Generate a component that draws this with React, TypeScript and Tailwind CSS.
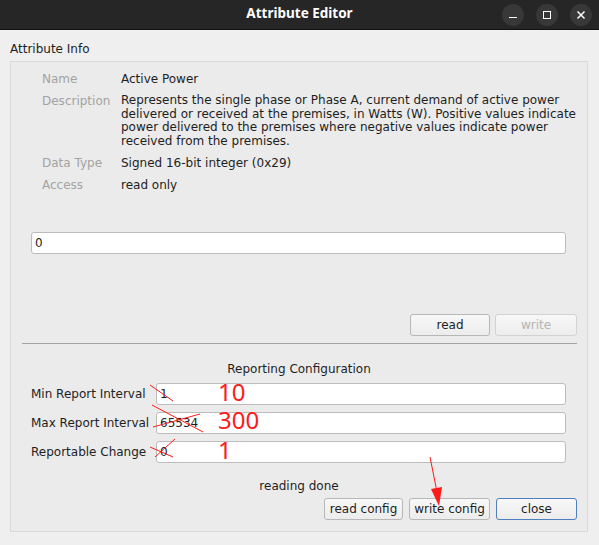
const info: Array<[string, string[]]> = [
  ["Name", ["Active Power"]],
  [
    "Description",
    [
      "Represents the single phase or Phase A, current demand of active power",
      "delivered or received at the premises, in Watts (W). Positive values indicate",
      "power delivered to the premises where negative values indicate power",
      "received from the premises.",
    ],
  ],
  ["Data Type", ["Signed 16-bit integer (0x29)"]],
  ["Access", ["read only"]],
];

const reporting: Array<[string, string]> = [
  ["Min Report Interval", "1"],
  ["Max Report Interval", "65534"],
  ["Reportable Change", "0"],
];

function Button({ label, width, disabled, primary }: { label: string; width: string; disabled?: boolean; primary?: boolean }) {
  const border = primary ? "border-[#4f7fbf]" : disabled ? "border-[#d2d2d2]" : "border-[#b7b7b7]";
  const text = disabled ? "text-[#b3b3b3]" : "text-[#1e1e1e]";
  return (
    <div
      className={`${width} ${border} ${text} flex h-[22px] items-center justify-center rounded-[3px] border bg-gradient-to-b from-[#f8f8f8] to-[#ececec] leading-none`}
    >
      {label}
    </div>
  );
}

function TitleButton({ children }: { children: React.ReactNode }) {
  return (
    <div className="flex h-[22px] w-[22px] items-center justify-center rounded-full bg-[#383838]">{children}</div>
  );
}

function Annotations() {
  return (
    <svg className="pointer-events-none absolute left-0 top-0" width="599" height="545" viewBox="0 0 599 545">
      <g stroke="#ff1a1a" strokeWidth="1" fill="none">
        <line x1="150" y1="385" x2="173" y2="401" />
        <line x1="152" y1="405" x2="203" y2="432" />
        <line x1="153" y1="427" x2="200" y2="414" />
        <line x1="150" y1="447" x2="173" y2="457" />
        <line x1="155" y1="457" x2="175" y2="439" />
        <line x1="430" y1="457" x2="437" y2="492" />
      </g>
      <polygon points="431,489 442,487 439,506" fill="#ff1a1a" />
      <g fill="#ff1a1a" fontFamily="'Noto Sans', sans-serif" fontSize="24">
        <text x="218" y="401">10</text>
        <text x="218" y="429">300</text>
        <text x="218" y="459">1</text>
      </g>
    </svg>
  );
}

export default function App() {
  return (
    <div className="relative h-[545px] w-[599px] overflow-hidden bg-[#efefef] font-['DejaVu_Sans',sans-serif] text-[12px] text-[#1e1e1e]">
      {/* title bar */}
      <div className="relative flex h-[30px] items-center justify-end gap-[12px] border-b border-[#111] bg-[#262626] pr-[7px]">
        <div className="absolute inset-0 flex items-center justify-center pb-[2px] font-['Noto_Sans',sans-serif] text-[13.5px] font-bold text-white">
          Attribute Editor
        </div>
        <TitleButton>
          <div className="mt-[6px] h-[1.5px] w-[8px] bg-white" />
        </TitleButton>
        <TitleButton>
          <div className="h-[8px] w-[8px] border-[1.5px] border-white" />
        </TitleButton>
        <TitleButton>
          <svg width="10" height="10" viewBox="0 0 10 10">
            <path d="M1.5 1.5 L8.5 8.5 M8.5 1.5 L1.5 8.5" stroke="white" strokeWidth="1.5" />
          </svg>
        </TitleButton>
      </div>

      <div className="pl-[10px] pr-[11px]">
        <div className="mt-[12px] h-[14px] leading-[14px]">Attribute Info</div>

        <div className="mt-[5px] flex flex-col border border-[#d9d9d9] bg-[#ebebeb] pb-[11px]">
          <div className="flex flex-col gap-[8px] pl-[31px] pt-[10px] leading-[14px]">
            {info.map(([label, lines]) => (
              <div key={label} className="flex">
                <div className="w-[79px] shrink-0 text-[#a3a3a3]">{label}</div>
                <div className="flex flex-col whitespace-nowrap leading-[13.5px]">
                  {lines.map((l) => (
                    <span key={l} className={lines.length === 1 ? "leading-[14px]" : ""}>
                      {l}
                    </span>
                  ))}
                </div>
              </div>
            ))}
          </div>

          <div className="ml-[20px] mr-[21px] mt-[40px] flex h-[22px] items-center rounded-[3px] border border-[#bcbcbc] bg-white pl-[3px]">
            0
          </div>

          <div className="mr-[10px] mt-[60px] flex justify-end gap-[5px]">
            <Button label="read" width="w-[80px]" />
            <Button label="write" width="w-[82px]" disabled />
          </div>

          <div className="ml-[11px] mr-[10px] mt-[7px] h-px bg-[#a3a3a3]" />

          <div className="mt-[18px] text-center leading-[14px]">Reporting Configuration</div>

          <div className="mt-[7px] flex flex-col gap-[7px] pl-[20px] pr-[21px]">
            {reporting.map(([label, value]) => (
              <div key={label} className="flex items-center">
                <div className="w-[125px] shrink-0">{label}</div>
                <div className="flex h-[22px] flex-1 items-center rounded-[3px] border border-[#bcbcbc] bg-white pl-[3px]">
                  {value}
                </div>
              </div>
            ))}
          </div>

          <div className="mt-[16px] text-center leading-[14px]">reading done</div>

          <div className="mr-[10px] mt-[5px] flex justify-end gap-[6px]">
            <Button label="read config" width="w-[79px]" />
            <Button label="write config" width="w-[81px]" />
            <Button label="close" width="w-[81px]" primary />
          </div>
        </div>
      </div>

      <Annotations />
    </div>
  );
}
